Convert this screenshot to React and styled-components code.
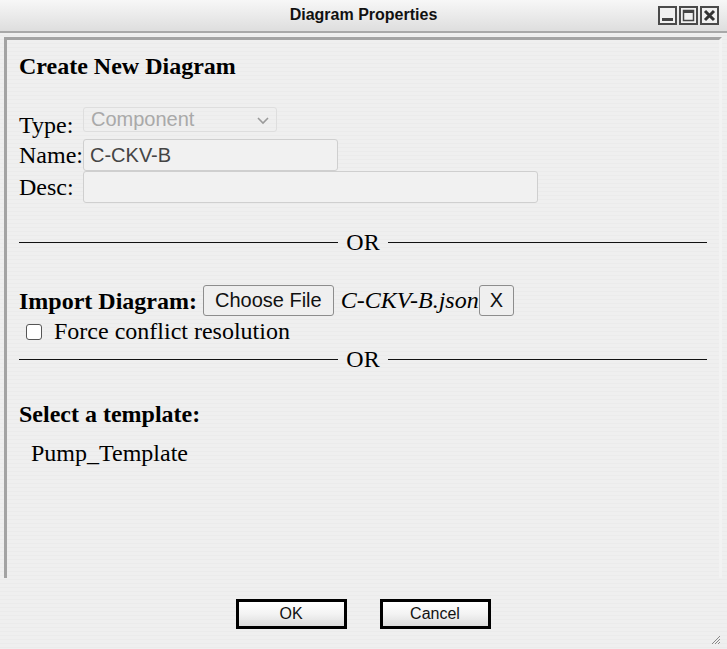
import React from "react";
import styled, { createGlobalStyle } from "styled-components";

const Global = createGlobalStyle`
  html, body { margin: 0; padding: 0; }
  body { width: 727px; height: 649px; overflow: hidden; background: #efefef; }
`;

const Window = styled.div`
  width: 727px;
  height: 649px;
  display: flex;
  flex-direction: column;
  background: repeating-linear-gradient(180deg, #efefef 0px, #efefef 3px, #ebebeb 3px, #ebebeb 4px);
  font-family: "Liberation Serif", "Times New Roman", serif;
  color: #000;
  position: relative;
`;

const TitleBar = styled.div`
  height: 31px;
  flex: none;
  display: flex;
  align-items: center;
  justify-content: center;
  background: linear-gradient(180deg, #f7f7f7 0%, #dedede 100%);
  border-bottom: 2px solid #a8a8a8;
  position: relative;
`;

const Title = styled.div`
  font-family: "Liberation Sans", Arial, sans-serif;
  font-weight: bold;
  font-size: 16px;
  color: #111;
  padding-bottom: 2px;
`;

const WinButtons = styled.div`
  position: absolute;
  right: 8px;
  top: 6px;
  display: flex;
  gap: 2px;
`;

const WinBtn = styled.div`
  width: 15px;
  height: 15px;
  border: 2px solid #4a4a4a;
  background: #f0f0f0;
  display: flex;
  align-items: center;
  justify-content: center;
  box-sizing: content-box;
`;

const Body = styled.div`
  flex: 1;
  display: flex;
  flex-direction: column;
  padding: 4px 5px 0 4px;
`;

const Panel = styled.div`
  height: 541px;
  flex: none;
  border-top: 3px solid #a3a3a3;
  border-left: 3px solid #a3a3a3;
  border-right: 3px solid #f2f2f2;
  padding: 12px 12px 0 12px;
  box-sizing: border-box;
`;

const Heading = styled.div`
  font-weight: bold;
  font-size: 24px;
  line-height: 28px;
  margin-bottom: 27px;
`;

const FieldRow = styled.div`
  display: flex;
  align-items: ${(p) => p.$align || "center"};
  height: ${(p) => p.$h || 32}px;
`;

const Label = styled.span`
  font-size: 24px;
  line-height: 28px;
  width: 64px;
  flex: none;
  align-self: ${(p) => p.$self || "auto"};
`;

const Select = styled.div`
  width: 194px;
  height: 25px;
  box-sizing: border-box;
  border: 1px solid #dedede;
  border-radius: 3px;
  display: flex;
  align-items: center;
  justify-content: space-between;
  padding: 0 5px 0 7px;
  font-family: "Liberation Sans", Arial, sans-serif;
  font-size: 20px;
  color: #a9a9a9;
`;

const TextInput = styled.div`
  width: ${(p) => p.$w}px;
  height: 32px;
  box-sizing: border-box;
  border: 1px solid #cfcfcf;
  border-radius: 3px;
  display: flex;
  align-items: center;
  padding: 0 6px;
  font-family: "Liberation Sans", Arial, sans-serif;
  font-size: 20px;
  color: #444;
  background: #f1f1f1;
`;

const Divider = styled.div`
  display: flex;
  align-items: center;
  gap: 8px;
  font-size: 24px;
  line-height: 24px;
  margin: ${(p) => p.$m};
  &::before, &::after {
    content: "";
    flex: 1;
    height: 1px;
    background: #111;
  }
`;

const ImportRow = styled.div`
  display: flex;
  align-items: center;
  height: 31px;
`;

const BoldLabel = styled.span`
  font-weight: bold;
  font-size: 24px;
  line-height: 28px;
  margin-right: 6px;
`;

const FileButton = styled.button`
  height: 31px;
  padding: 0 ${(p) => p.$pad || 11}px;
  border: 1px solid #8d8d8d;
  border-radius: 3px;
  background: #efefef;
  font-family: "Liberation Sans", Arial, sans-serif;
  font-size: 20px;
  color: #111;
  margin: 0;
`;

const FileName = styled.span`
  font-style: italic;
  font-size: 24px;
  margin-left: 7px;
`;

const CheckRow = styled.label`
  display: flex;
  align-items: center;
  height: 31px;
  font-size: 24px;
  padding-left: 7px;
`;

const CheckBox = styled.span`
  width: 14px;
  height: 14px;
  border: 1px solid #555;
  border-radius: 3px;
  background: #fff;
  margin-right: 12px;
  flex: none;
`;

const SectionLabel = styled.div`
  font-weight: bold;
  font-size: 24px;
  line-height: 28px;
`;

const TemplateItem = styled.div`
  font-size: 24px;
  line-height: 28px;
  padding-left: 12px;
  margin-top: 11px;
`;

const Footer = styled.div`
  flex: 1;
  display: flex;
  justify-content: center;
  align-items: flex-start;
  gap: 33px;
  padding-top: 21px;
`;

const DlgButton = styled.button`
  width: 111px;
  height: 30px;
  border: 3px solid #000;
  background: linear-gradient(180deg, #ffffff 0%, #f3f3f3 50%, #dcdcdc 100%);
  font-family: "Liberation Sans", Arial, sans-serif;
  font-size: 16px;
  color: #111;
  padding: 0;
  margin: 0;
`;

const Grip = styled.svg`
  position: absolute;
  right: 6px;
  bottom: 4px;
`;

export default function App() {
  return (
    <>
      <Global />
      <Window>
        <TitleBar>
          <Title>Diagram Properties</Title>
          <WinButtons>
            <WinBtn>
              <svg width="15" height="15"><rect x="2" y="10" width="11" height="3" fill="#444" /></svg>
            </WinBtn>
            <WinBtn>
              <svg width="15" height="15"><rect x="2.5" y="2.5" width="10" height="10" fill="none" stroke="#444" strokeWidth="1.5" /><rect x="2" y="2" width="11" height="3" fill="#444" /></svg>
            </WinBtn>
            <WinBtn>
              <svg width="15" height="15"><path d="M3 3 L12 12 M12 3 L3 12" stroke="#333" strokeWidth="3" /></svg>
            </WinBtn>
          </WinButtons>
        </TitleBar>
        <Body>
          <Panel>
            <Heading>Create New Diagram</Heading>
            <FieldRow $h={32} $align="flex-start">
              <Label $self="flex-end">Type:</Label>
              <Select>
                <span>Component</span>
                <svg width="16" height="16" viewBox="0 0 16 16"><path d="M3 6 L8 11 L13 6" fill="none" stroke="#9a9a9a" strokeWidth="1.6" /></svg>
              </Select>
            </FieldRow>
            <FieldRow $h={32}>
              <Label>Name:</Label>
              <TextInput $w={255}>C-CKV-B</TextInput>
            </FieldRow>
            <FieldRow $h={32}>
              <Label>Desc:</Label>
              <TextInput $w={455} />
            </FieldRow>
            <Divider $m="27px 0 31px 0">OR</Divider>
            <ImportRow>
              <BoldLabel>Import Diagram:</BoldLabel>
              <FileButton>Choose File</FileButton>
              <FileName>C-CKV-B.json</FileName>
              <FileButton $pad={10}>X</FileButton>
            </ImportRow>
            <CheckRow>
              <CheckBox />
              Force conflict resolution
            </CheckRow>
            <Divider $m="0 0 29px 0">OR</Divider>
            <SectionLabel>Select a template:</SectionLabel>
            <TemplateItem>Pump_Template</TemplateItem>
          </Panel>
          <Footer>
            <DlgButton>OK</DlgButton>
            <DlgButton>Cancel</DlgButton>
          </Footer>
        </Body>
        <Grip width="12" height="12" viewBox="0 0 12 12">
          <path d="M11 3 L3 11 M11 6 L6 11 M11 9 L9 11" stroke="#888" strokeWidth="1" />
        </Grip>
      </Window>
    </>
  );
}
